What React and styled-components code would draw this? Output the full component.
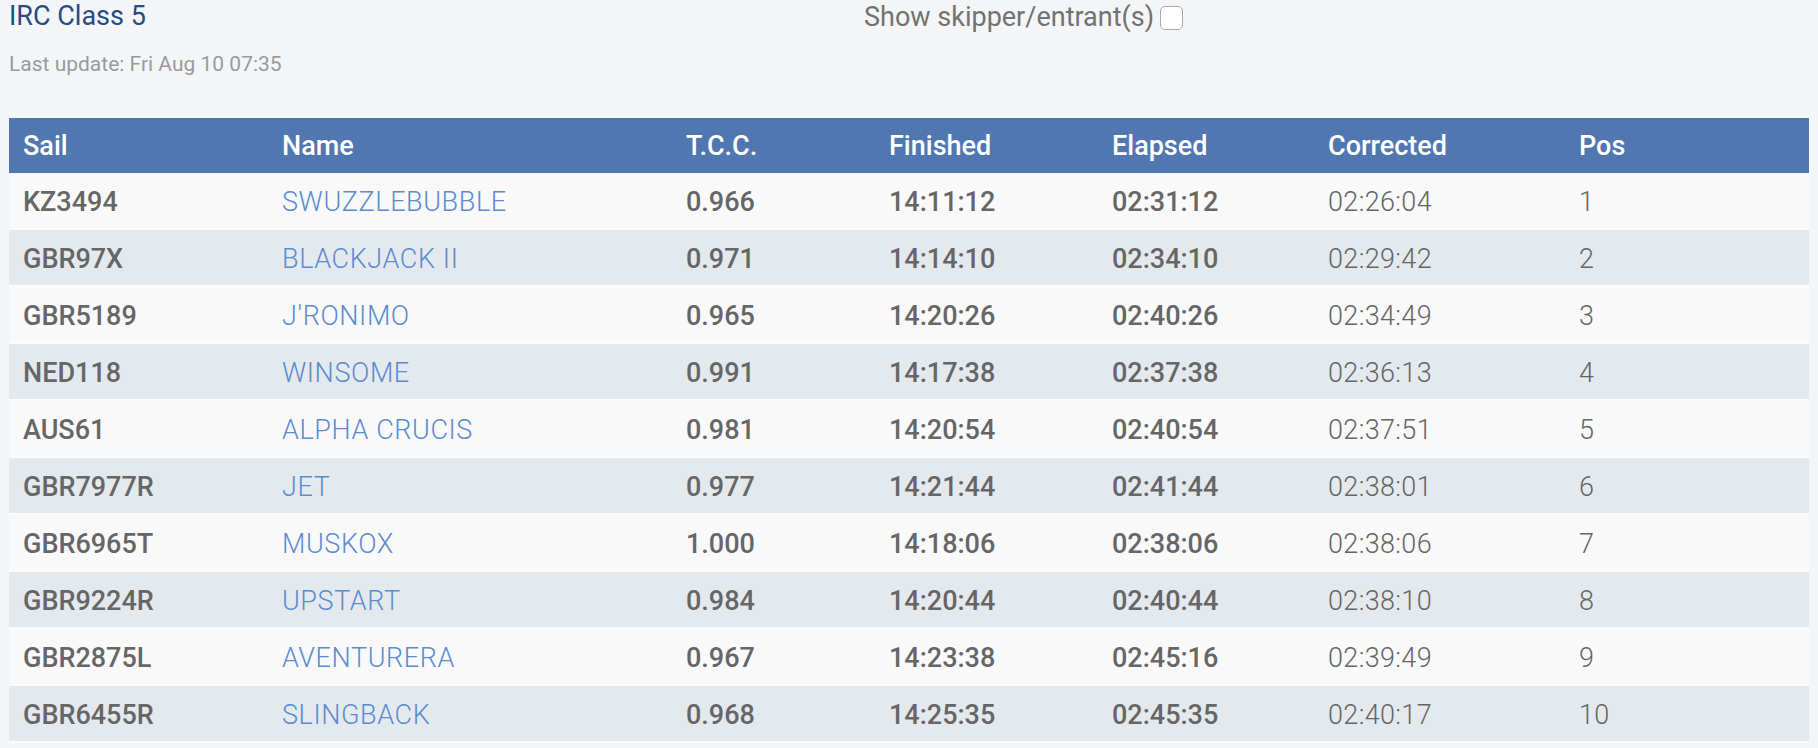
import React from "react";
import styled, { createGlobalStyle } from "styled-components";

const GlobalStyle = createGlobalStyle`
  body {
    margin: 0;
    background: #f4f5f7;
    font-family: Roboto, "Liberation Sans", sans-serif;
  }
`;

const columns = [
  { key: "sail", label: "Sail", width: 259 },
  { key: "name", label: "Name", width: 404 },
  { key: "tcc", label: "T.C.C.", width: 203 },
  { key: "finished", label: "Finished", width: 223 },
  { key: "elapsed", label: "Elapsed", width: 216 },
  { key: "corrected", label: "Corrected", width: 251 },
  { key: "pos", label: "Pos", width: 244 },
];

const results = [
  ["KZ3494", "SWUZZLEBUBBLE", "0.966", "14:11:12", "02:31:12", "02:26:04", "1"],
  ["GBR97X", "BLACKJACK II", "0.971", "14:14:10", "02:34:10", "02:29:42", "2"],
  ["GBR5189", "J'RONIMO", "0.965", "14:20:26", "02:40:26", "02:34:49", "3"],
  ["NED118", "WINSOME", "0.991", "14:17:38", "02:37:38", "02:36:13", "4"],
  ["AUS61", "ALPHA CRUCIS", "0.981", "14:20:54", "02:40:54", "02:37:51", "5"],
  ["GBR7977R", "JET", "0.977", "14:21:44", "02:41:44", "02:38:01", "6"],
  ["GBR6965T", "MUSKOX", "1.000", "14:18:06", "02:38:06", "02:38:06", "7"],
  ["GBR9224R", "UPSTART", "0.984", "14:20:44", "02:40:44", "02:38:10", "8"],
  ["GBR2875L", "AVENTURERA", "0.967", "14:23:38", "02:45:16", "02:39:49", "9"],
  ["GBR6455R", "SLINGBACK", "0.968", "14:25:35", "02:45:35", "02:40:17", "10"],
];

// weight per column: sail/tcc/finished/elapsed are medium, the rest light
const weights = [500, 300, 500, 500, 500, 300, 300];

export default function App() {
  return (
    <Page>
      <GlobalStyle />
      <TopBar>
        <div>
          <Title>IRC Class 5</Title>
          <Updated>Last update: Fri Aug 10 07:35</Updated>
        </div>
        <ToggleLabel>
          Show skipper/entrant(s)
          <Checkbox type="checkbox" />
        </ToggleLabel>
      </TopBar>

      <Table>
        <colgroup>
          {columns.map((c) => (
            <col key={c.key} style={{ width: c.width }} />
          ))}
        </colgroup>
        <thead>
          <tr>
            {columns.map((c) => (
              <Th key={c.key}>{c.label}</Th>
            ))}
          </tr>
        </thead>
        <tbody>
          {results.map((row, i) => (
            <Row key={row[0]} $striped={i % 2 === 1}>
              {row.map((val, j) =>
                j === 1 ? (
                  <Td key={j} $weight={weights[j]}>
                    <BoatLink href="#">{val}</BoatLink>
                  </Td>
                ) : (
                  <Td key={j} $weight={weights[j]}>
                    {val}
                  </Td>
                )
              )}
            </Row>
          ))}
        </tbody>
      </Table>
    </Page>
  );
}

const Page = styled.div`
  padding: 0 9px;
`;

const TopBar = styled.div`
  display: grid;
  grid-template-columns: 855px auto;
  align-items: start;
`;

const Title = styled.h1`
  margin: 0;
  font-size: 27px;
  font-weight: 400;
  line-height: 32px;
  color: #274b83;
`;

const Updated = styled.p`
  margin: 20px 0 0;
  font-size: 21px;
  font-weight: 400;
  line-height: 24px;
  color: #9a9a9a;
`;

const ToggleLabel = styled.label`
  display: flex;
  align-items: center;
  gap: 6px;
  margin-top: 1px;
  font-size: 27px;
  line-height: 32px;
  color: #727272;
`;

const Checkbox = styled.input`
  appearance: none;
  margin: 2px 0 0;
  width: 23px;
  height: 24px;
  border: 1.5px solid #a9a9a9;
  border-radius: 5px;
  background: #fff;
`;

const Table = styled.table`
  margin-top: 42px;
  width: 1800px;
  table-layout: fixed;
  border-collapse: collapse;
`;

const Th = styled.th`
  height: 55px;
  padding: 0 14px;
  background: #5077b0;
  color: #fff;
  font-size: 27px;
  font-weight: 500;
  text-align: left;
`;

const Row = styled.tr`
  background: ${(p) => (p.$striped ? "#e4e9ee" : "#f9f9f9")};
  border-bottom: 2px solid #fcfcfc;
`;

const Td = styled.td`
  height: 52px;
  padding: 3px 14px 0;
  font-size: 27px;
  font-weight: ${(p) => p.$weight};
  letter-spacing: ${(p) => (p.$weight === 300 ? "0.35px" : "0")};
  color: #666;
`;

const BoatLink = styled.a`
  color: #5b8cd1;
  letter-spacing: 0.6px;
  text-decoration: none;
`;
